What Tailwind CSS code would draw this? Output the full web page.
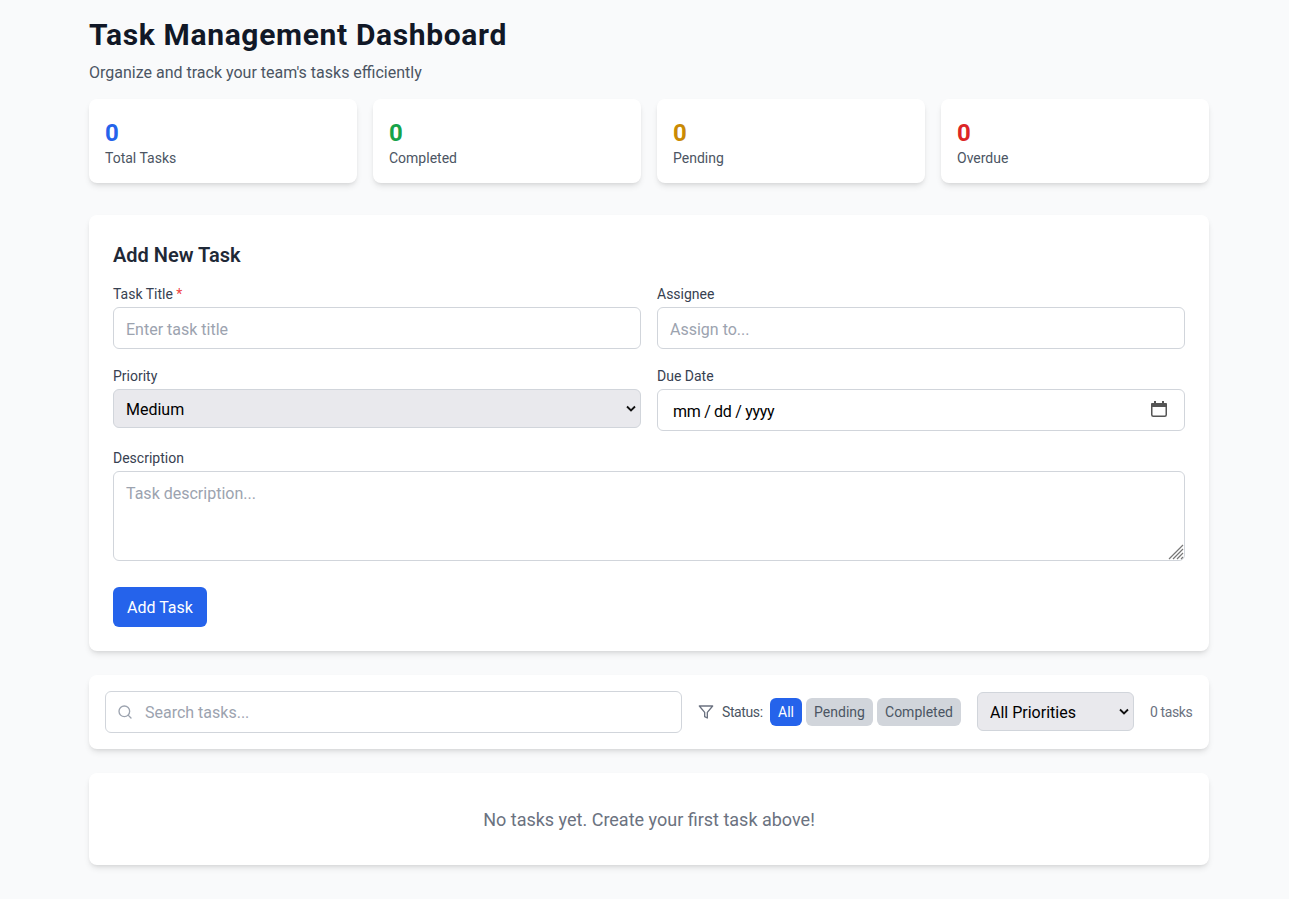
<!DOCTYPE html>
<html lang="en">
<head>
  <meta charset="UTF-8" />
  <title>Task Management Dashboard</title>
  <script src="https://cdn.jsdelivr.net/npm/@tailwindcss/browser@4"></script>
</head>
<body class="bg-[#f9fafb] font-['Roboto',sans-serif] overflow-hidden h-[899px]">
  <div class="ml-[89px] w-[1120px] pt-[17px]">
    <div class="mb-[14px]">
      <h1 class="text-3xl font-bold text-[#111827] tracking-[0.65px] mb-2">Task Management Dashboard</h1>
      <p class="text-base text-[#4b5563]">Organize and track your team's tasks efficiently</p>
    </div>

    <!-- stats -->
    <div class="grid grid-cols-4 gap-4 mb-8">
      <div class="bg-white rounded-lg shadow-md px-4 pt-[18px] pb-[15px]">
        <div class="text-2xl font-bold text-[#2563eb] leading-8 -mb-px">0</div>
        <div class="text-sm text-[#4b5563] leading-5">Total Tasks</div>
      </div>
      <div class="bg-white rounded-lg shadow-md px-4 pt-[18px] pb-[15px]">
        <div class="text-2xl font-bold text-[#16a34a] leading-8 -mb-px">0</div>
        <div class="text-sm text-[#4b5563] leading-5">Completed</div>
      </div>
      <div class="bg-white rounded-lg shadow-md px-4 pt-[18px] pb-[15px]">
        <div class="text-2xl font-bold text-[#ca8a04] leading-8 -mb-px">0</div>
        <div class="text-sm text-[#4b5563] leading-5">Pending</div>
      </div>
      <div class="bg-white rounded-lg shadow-md px-4 pt-[18px] pb-[15px]">
        <div class="text-2xl font-bold text-[#dc2626] leading-8 -mb-px">0</div>
        <div class="text-sm text-[#4b5563] leading-5">Overdue</div>
      </div>
    </div>

    <!-- form -->
    <form class="bg-white rounded-lg shadow-md px-6 pt-[26px] pb-6 mb-6">
      <h2 class="text-xl font-semibold text-[#1f2937] mb-[14px]">Add New Task</h2>
      <div class="grid grid-cols-2 gap-x-4 gap-y-4 mb-4">
        <div>
          <label class="block text-sm text-[#374151] pt-px mb-[3px]">Task Title <span class="text-[#ef4444]">*</span></label>
          <input type="text" placeholder="Enter task title" class="w-full h-[42px] px-3 pt-[9px] pb-[7px] border border-[#d1d5db] rounded-md placeholder:text-[#9ca3af]" />
        </div>
        <div>
          <label class="block text-sm text-[#374151] pt-px mb-[3px]">Assignee</label>
          <input type="text" placeholder="Assign to..." class="w-full h-[42px] px-3 pt-[9px] pb-[7px] border border-[#d1d5db] rounded-md placeholder:text-[#9ca3af]" />
        </div>
        <div>
          <label class="block text-sm text-[#374151] pt-px mb-[3px]">Priority</label>
          <div class="relative">
            <select class="block w-full h-[39px] pl-3 pr-6 pt-[2px] border border-[#d1d5db] rounded-md bg-[#e9e9ed] text-black appearance-none">
              <option>Medium</option>
            </select>
            <svg class="absolute right-[5px] top-[16px] w-[10px] h-2 pointer-events-none" viewBox="0 0 10 8" fill="none" stroke="#111" stroke-width="1.8"><path d="M1 1.5 5 5.5 9 1.5"/></svg>
          </div>
        </div>
        <div>
          <label class="block text-sm text-[#374151] pt-px mb-[3px]">Due Date</label>
          <div class="relative">
            <input type="text" value="mm / dd / yyyy" class="w-full h-[42px] pl-[15px] pr-3 pt-[9px] pb-[7px] border border-[#d1d5db] rounded-md text-black tracking-[-0.3px]" />
            <svg class="absolute right-[18px] top-[12px] w-4 h-4" viewBox="0 0 16 16" fill="none"><rect x="0.75" y="3" width="14.5" height="12.25" rx="1.5" stroke="#555" stroke-width="1.5"/><rect x="0" y="2" width="16" height="4" rx="1" fill="#555"/><rect x="3" y="0" width="2" height="2" fill="#555"/><rect x="11" y="0" width="2" height="2" fill="#555"/></svg>
          </div>
        </div>
      </div>
      <div class="mb-[26px]">
        <label class="block text-sm text-[#374151] pt-px mb-[3px]">Description</label>
        <div class="relative">
          <textarea placeholder="Task description..." class="block w-full h-[90px] px-3 pt-[10px] pb-2 border border-[#d1d5db] rounded-md resize-none placeholder:text-[#9ca3af]"></textarea>
          <svg class="absolute right-px bottom-px w-4 h-4 pointer-events-none" viewBox="0 0 16 16" fill="none" stroke="#777" stroke-width="1.2"><path d="M1 15 15 1M5 15 15 5M9 15l6-6M13 15l2-2"/></svg>
        </div>
      </div>
      <button type="button" class="block w-[94px] h-10 pt-px bg-[#2563eb] text-white rounded-md">Add Task</button>
    </form>

    <!-- filters -->
    <div class="bg-white rounded-lg shadow-md p-4 mb-6 flex items-center gap-4">
      <div class="relative flex-1">
        <svg class="absolute left-3 top-[13px] w-4 h-4 text-[#9ca3af]" viewBox="0 0 24 24" fill="none" stroke="currentColor" stroke-width="2" stroke-linecap="round" stroke-linejoin="round"><circle cx="11" cy="11" r="8"/><path d="m21 21-4.3-4.3"/></svg>
        <input type="text" placeholder="Search tasks..." class="w-full h-[42px] pl-[39px] pr-4 border border-[#d1d5db] rounded-md placeholder:text-[#9ca3af]" />
      </div>
      <div class="flex items-center gap-1">
        <svg class="w-4 h-4 text-[#6b7280] mr-1" viewBox="0 0 24 24" fill="none" stroke="currentColor" stroke-width="2" stroke-linecap="round" stroke-linejoin="round"><path d="M22 3H2l8 9.46V19l4 2v-8.54L22 3z"/></svg>
        <span class="w-11 text-sm text-[#4b5563] tracking-[-0.4px]">Status:</span>
        <button class="h-7 w-8 text-sm rounded-md bg-[#2563eb] text-white">All</button>
        <button class="h-7 w-[67px] text-sm rounded-md bg-[#d1d5db] text-[#4b5563]">Pending</button>
        <button class="h-7 w-[84px] text-sm rounded-md bg-[#d1d5db] text-[#4b5563]">Completed</button>
      </div>
      <div class="relative w-[157px] mb-px">
        <select class="block w-full h-[39px] pl-3 pr-6 pt-[2px] border border-[#d1d5db] rounded-md bg-[#e9e9ed] text-black appearance-none">
          <option>All Priorities</option>
        </select>
        <svg class="absolute right-[5px] top-[16px] w-[10px] h-2 pointer-events-none" viewBox="0 0 10 8" fill="none" stroke="#111" stroke-width="1.8"><path d="M1 1.5 5 5.5 9 1.5"/></svg>
      </div>
      <span class="w-[43px] text-sm text-[#6b7280] whitespace-nowrap tracking-[-0.4px]">0 tasks</span>
    </div>

    <!-- empty state -->
    <div class="bg-white rounded-lg shadow-md px-8 pt-[33px] pb-[31px] text-center">
      <p class="text-lg text-[#6b7280]">No tasks yet. Create your first task above!</p>
    </div>
  </div>
</body>
</html>
